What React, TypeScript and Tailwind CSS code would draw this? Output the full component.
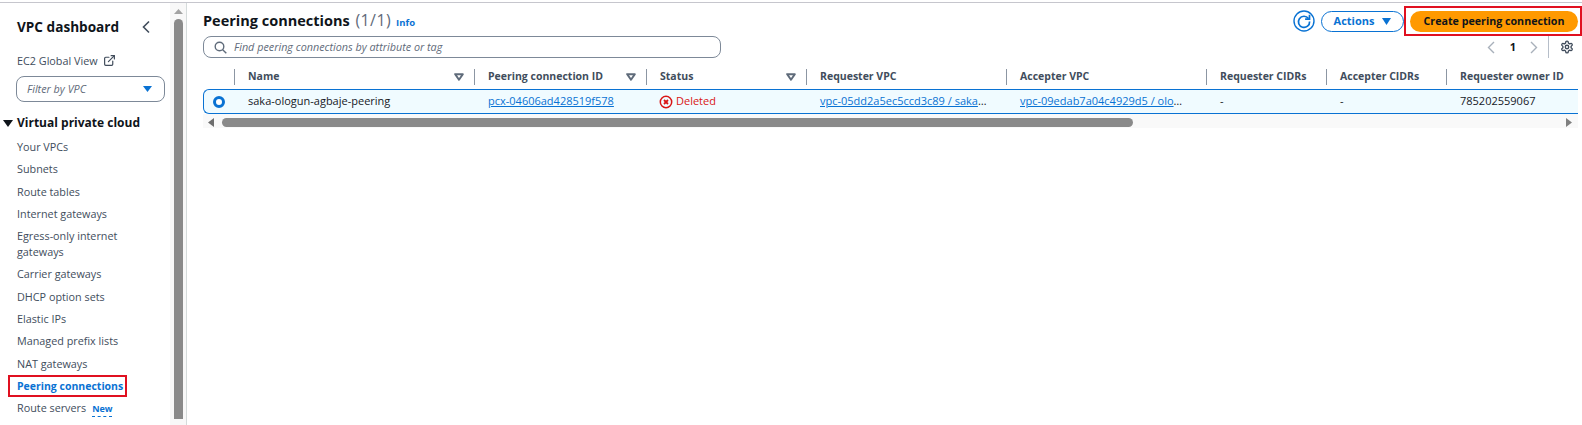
import React from "react";
import { ExternalLink } from "lucide-react";

const font = "font-['Open_Sans','Noto_Sans',sans-serif]";

const NavItem = ({ children, cls = "" }: { children: React.ReactNode; cls?: string }) => (
  <div className={`pl-[17px] text-[10.8px] leading-[16px] text-[#414d5c] ${cls}`}>{children}</div>
);

const SortIcon = () => (
  <svg width="10" height="8" viewBox="0 0 10 8" className="shrink-0">
    <path d="M1.200 1.200h7.600L5 6.800z" fill="none" stroke="#5f6b7a" strokeWidth="2" strokeLinejoin="round" />
  </svg>
);

const cols = [
  { w: "w-[240px]", label: "Name", sort: true },
  { w: "w-[172px]", label: "Peering connection ID", sort: true },
  { w: "w-[160px]", label: "Status", sort: true },
  { w: "w-[200px]", label: "Requester VPC" },
  { w: "w-[200px]", label: "Accepter VPC" },
  { w: "w-[120px]", label: "Requester CIDRs" },
  { w: "w-[120px]", label: "Accepter CIDRs" },
  { w: "w-[132px]", label: "Requester owner ID" },
];

export default function App() {
  return (
    <div className={`${font} h-[425px] w-[1582px] overflow-hidden bg-white pt-[2px] text-[#0f141a]`}>
      <div className="flex h-full border-t border-[#c6c6cd]">
        <aside className="flex h-full w-[187px] shrink-0 border-r border-[#d5dbdb]">
          <div className="w-[170px] shrink-0">
            <div className="flex items-center justify-between pl-[17px] pr-[19px] pt-[13px]">
              <span className="text-[13.600px] font-bold leading-[22px]">VPC dashboard</span>
              <svg width="10" height="14" viewBox="0 0 10 14"><path d="M8 1.500 2.500 7 8 12.500" fill="none" stroke="#414d5c" strokeWidth="1.600" /></svg>
            </div>
            <div className="mt-[15px] flex items-center gap-[5px] pl-[17px] text-[10.800px] leading-[16px] text-[#414d5c]">
              EC2 Global View
              <ExternalLink size={13} strokeWidth={2.2} className="mb-[2px] text-[#414d5c]" />
            </div>
            <div className="ml-[16px] mr-[5px] mt-[7px] flex h-[26px] items-center justify-between rounded-lg border border-[#7d8998] pl-[10px] pr-[12px]">
              <span className="text-[10.800px] italic text-[#5f6b7a]">Filter by VPC</span>
              <svg width="9" height="6" viewBox="0 0 9 6"><path d="M0 0h9L4.500 6z" fill="#0972d3" /></svg>
            </div>
            <div className="mt-[12px] flex items-center gap-[4px] pl-[3px] text-[12px] font-bold leading-[18px]">
              <svg width="10" height="7" viewBox="0 0 10 7"><path d="M0 0h10L5 7z" fill="#0f141a" /></svg>
              Virtual private cloud
            </div>
            <div className="mt-[7px] flex flex-col gap-[6.300px]">
              <NavItem>Your VPCs</NavItem>
              <NavItem>Subnets</NavItem>
              <NavItem>Route tables</NavItem>
              <NavItem>Internet gateways</NavItem>
              <NavItem>Egress-only internet<br />gateways</NavItem>
              <NavItem>Carrier gateways</NavItem>
              <NavItem>DHCP option sets</NavItem>
              <NavItem>Elastic IPs</NavItem>
              <NavItem>Managed prefix lists</NavItem>
              <NavItem>NAT gateways</NavItem>
              <NavItem cls="font-bold !text-[10.500px] !text-[#0972d3]">
                <span className="relative inline-block">
                  Peering connections
                  <span className="absolute -bottom-[3px] -left-[9px] -right-[4px] -top-[3px] border-2 border-[#e01020]" />
                </span>
              </NavItem>
              <NavItem>
                Route servers
                <span className="ml-[6px] border-b border-dashed border-[#0972d3] pb-[1px] text-[9px] font-bold text-[#0972d3]">New</span>
              </NavItem>
            </div>
          </div>
          <div className="flex w-[16px] shrink-0 flex-col items-center bg-[#f8f8f8]">
            <svg width="9" height="5" viewBox="0 0 9 5" className="mt-[6px]"><path d="M0 5h9L4.500 0z" fill="#a3a3a3" /></svg>
            <div className="mt-[5px] h-[400px] w-[9px] rounded-t-full bg-[#8a8a8a]" />
          </div>
        </aside>

        <main className="flex min-w-0 flex-1 flex-col pl-[16px]">
          <div className="flex items-start justify-between">
            <div className="flex items-baseline pt-[7px]">
              <h1 className="text-[14.500px] font-bold leading-[20px]">
                Peering connections <span className="ml-[2px] text-[16px] font-normal tracking-wide text-[#5f6b7a]">(1/1)</span>
              </h1>
              <span className="ml-[5px] text-[9.500px] font-bold text-[#0972d3]">Info</span>
            </div>
            <div className="flex items-center pr-[4px] pt-[7px]">
              <svg width="22" height="22" viewBox="0 0 22 22" className="mr-[6px]">
                <circle cx="11" cy="11" r="10" fill="none" stroke="#0972d3" strokeWidth="1.400" />
                <path d="M15.500 8.500A5.600 5.600 0 1 0 16.600 11.500" fill="none" stroke="#0972d3" strokeWidth="1.700" />
                <path d="M16.500 4.800v4.400h-4.400" fill="none" stroke="#0972d3" strokeWidth="1.700" />
              </svg>
              <button className="flex h-[21px] w-[83px] items-center justify-center gap-[8px] rounded-full border border-[#0972d3] text-[11px] font-bold text-[#0972d3]">
                Actions
                <svg width="9" height="7" viewBox="0 0 9 7"><path d="M0 0h9L4.500 7z" fill="#0972d3" /></svg>
              </button>
              <div className="relative ml-[6px]">
                <button className="flex h-[21px] w-[168px] items-center justify-center rounded-full bg-[#ff9900] text-[10.700px] font-bold text-[#0f141a]">
                  Create peering connection
                </button>
                <span className="absolute -bottom-[4px] -left-[6px] -right-[4px] -top-[5px] border-2 border-[#e01020]" />
              </div>
            </div>
          </div>

          <div className="mt-[4px] flex items-center justify-between pr-[8px]">
            <div className="flex h-[22px] w-[518px] items-center gap-[7px] rounded-lg border border-[#7d8998] pl-[10px]">
              <svg width="13" height="13" viewBox="0 0 13 13"><circle cx="5.500" cy="5.500" r="4.300" fill="none" stroke="#5f6b7a" strokeWidth="1.400" /><path d="m8.700 8.700 3.600 3.600" stroke="#5f6b7a" strokeWidth="1.400" /></svg>
              <span className="text-[10.800px] italic text-[#5f6b7a]">Find peering connections by attribute or tag</span>
            </div>
            <div className="flex items-center">
              <svg width="8" height="13" viewBox="0 0 8 13"><path d="M7 1 1.500 6.500 7 12" fill="none" stroke="#a8b0ba" strokeWidth="1.400" /></svg>
              <span className="ml-[15px] text-[11px] font-bold">1</span>
              <svg width="8" height="13" viewBox="0 0 8 13" className="ml-[14px]"><path d="m1 1 5.500 5.500L1 12" fill="none" stroke="#a8b0ba" strokeWidth="1.400" /></svg>
              <div className="ml-[10px] flex h-[22px] items-center border-l border-[#b6bec9] pl-[11px]">
                <svg width="14" height="14" viewBox="0 0 24 24" fill="none" stroke="#414d5c" strokeWidth="2.300" strokeLinecap="round" strokeLinejoin="round">
                  <path d="M12.220 2h-.44a2 2 0 0 0-2 2v.18a2 2 0 0 1-1 1.730l-.43.250a2 2 0 0 1-2 0l-.150-.080a2 2 0 0 0-2.730.730l-.220.380a2 2 0 0 0 .730 2.730l.150.100a2 2 0 0 1 1 1.720v.510a2 2 0 0 1-1 1.740l-.150.090a2 2 0 0 0-.730 2.730l.220.380a2 2 0 0 0 2.730.730l.150-.080a2 2 0 0 1 2 0l.430.250a2 2 0 0 1 1 1.730V20a2 2 0 0 0 2 2h.440a2 2 0 0 0 2-2v-.180a2 2 0 0 1 1-1.730l.430-.250a2 2 0 0 1 2 0l.150.080a2 2 0 0 0 2.730-.730l.220-.390a2 2 0 0 0-.730-2.730l-.150-.080a2 2 0 0 1-1-1.740v-.500a2 2 0 0 1 1-1.740l.150-.090a2 2 0 0 0 .730-2.730l-.220-.380a2 2 0 0 0-2.730-.730l-.150.080a2 2 0 0 1-2 0l-.430-.250a2 2 0 0 1-1-1.730V4a2 2 0 0 0-2-2z" />
                  <circle cx="12" cy="12" r="3" />
                </svg>
              </div>
            </div>
          </div>

          <div className="mt-[8px] w-[1375px]">
            <div className="flex h-[22px] items-center">
              <div className="w-[31px] shrink-0" />
              {cols.map((c) => (
                <div key={c.label} className={`${c.w} flex h-[16px] shrink-0 items-center justify-between border-l border-[#8c96a3] pl-[13px] pr-[10px] text-[10.500px] font-bold text-[#414d5c]`}>
                  <span className="whitespace-nowrap">{c.label}</span>
                  {c.sort && <SortIcon />}
                </div>
              ))}
            </div>
            <div className="mt-[1px] flex h-[25px] items-center rounded-l-md border-y border-l border-[#0972d3] bg-[#f0fbff] text-[11px]">
              <div className="flex w-[30px] shrink-0 items-center pl-[9px]">
                <span className="h-[12px] w-[12px] rounded-full border-[3.500px] border-[#0972d3] bg-white" />
              </div>
              <div className="w-[240px] shrink-0 pl-[14px] text-[#16191f]">saka-ologun-agbaje-peering</div>
              <div className="w-[172px] shrink-0 pl-[14px] text-[#0972d3] underline">pcx-04606ad428519f578</div>
              <div className="flex w-[160px] shrink-0 items-center gap-[3px] pl-[13px] text-[#d91515]">
                <svg width="14" height="14" viewBox="0 0 14 14">
                  <circle cx="7" cy="7" r="5.700" fill="none" stroke="#d91515" strokeWidth="1.500" />
                  <path d="m5 5 4 4M9 5 5 9" stroke="#d91515" strokeWidth="1.800" />
                </svg>
                Deleted
              </div>
              <div className="w-[200px] shrink-0 whitespace-nowrap pl-[14px] text-[#16191f]">
                <span className="text-[#0972d3] underline">vpc-05dd2a5ec5ccd3c89 / saka</span>…
              </div>
              <div className="w-[200px] shrink-0 whitespace-nowrap pl-[14px] text-[#16191f]">
                <span className="text-[#0972d3] underline">vpc-09edab7a04c4929d5 / olo</span>…
              </div>
              <div className="w-[120px] shrink-0 pl-[14px] text-[#16191f]">-</div>
              <div className="w-[120px] shrink-0 pl-[14px] text-[#16191f]">-</div>
              <div className="w-[132px] shrink-0 pl-[14px] text-[#16191f]">785202559067</div>
            </div>
            <div className="flex h-[14px] items-center bg-[#f9f9f9] pt-[3px]">
              <svg width="6" height="9" viewBox="0 0 6 9" className="ml-[5px]"><path d="M6 0v9L0 4.500z" fill="#6e6e6e" /></svg>
              <div className="ml-[8px] h-[9px] w-[911px] rounded-full bg-[#8a8a8a]" />
              <svg width="6" height="9" viewBox="0 0 6 9" className="ml-auto mr-[6px]"><path d="M0 0v9l6-4.500z" fill="#808080" /></svg>
            </div>
          </div>
        </main>
      </div>
    </div>
  );
}
